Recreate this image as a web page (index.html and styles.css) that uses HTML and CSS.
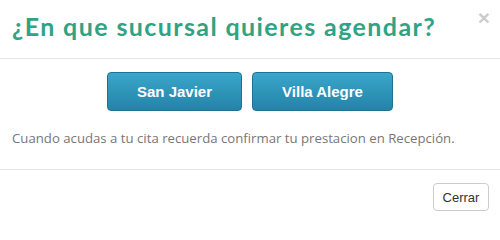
FILE: index.html
```html
<!DOCTYPE html>
<html lang="es">
<head>
<meta charset="utf-8">
<link rel="stylesheet" href="styles.css">
</head>
<body>
<div class="modal">
  <div class="modal-header">
    <h4 class="modal-title">¿En que sucursal quieres agendar?</h4>
    <button class="close" type="button">×</button>
  </div>
  <div class="modal-body">
    <div class="choices">
      <button class="btn-branch btn-sj" type="button">San Javier</button>
      <button class="btn-branch btn-va" type="button">Villa Alegre</button>
    </div>
    <p class="note">Cuando acudas a tu cita recuerda confirmar tu prestacion en Recepción.</p>
  </div>
  <div class="modal-footer">
    <button class="btn-default" type="button">Cerrar</button>
  </div>
</div>
</body>
</html>
```
FILE: styles.css
```css
html, body {
  margin: 0;
  padding: 0;
  background: #fff;
}
.modal {
  width: 500px;
  font-family: "Liberation Sans", Arial, sans-serif;
}
.modal-header {
  position: relative;
  height: 59px;
  box-sizing: border-box;
  padding: 9px 12px 0;
  border-bottom: 1px solid #e5e5e5;
}
.modal-title {
  margin: 0;
  font-family: Lato, "Open Sans", sans-serif;
  font-weight: 700;
  font-size: 25px;
  letter-spacing: 1.4px;
  line-height: 34px;
  color: #2fa383;
}
.close {
  position: absolute;
  top: 7px;
  right: 10px;
  padding: 0;
  border: 0;
  background: transparent;
  font-family: "Liberation Sans", Arial, sans-serif;
  font-size: 21px;
  font-weight: 700;
  line-height: 1;
  color: #000;
  opacity: 0.2;
}
.modal-body {
  padding: 13px 12px 0;
  height: 111px;
  box-sizing: border-box;
  border-bottom: 1px solid #e5e5e5;
}
.choices {
  display: flex;
  justify-content: center;
  gap: 10px;
}
.btn-branch {
  height: 39px;
  box-sizing: border-box;
  border: 1px solid #1f7193;
  border-radius: 4px;
  background: linear-gradient(to bottom, #3aa6ca 0%, #2483a8 100%);
  color: #fff;
  font-family: "Liberation Sans", Arial, sans-serif;
  font-weight: 700;
  font-size: 15px;
  padding: 0;
}
.btn-sj { width: 135px; }
.btn-va { width: 141px; }
.note {
  margin: 17px 0 0;
  font-family: "Open Sans", sans-serif;
  font-size: 13.2px;
  line-height: 20px;
  color: #777;
}
.modal-footer {
  display: flex;
  justify-content: flex-end;
  padding: 13px 11px 0;
}
.btn-default {
  width: 56px;
  height: 28px;
  box-sizing: border-box;
  border: 1px solid #ccc;
  border-radius: 4px;
  background: #fff;
  color: #333;
  font-family: "Liberation Sans", Arial, sans-serif;
  font-size: 13px;
  padding: 0;
}
```
